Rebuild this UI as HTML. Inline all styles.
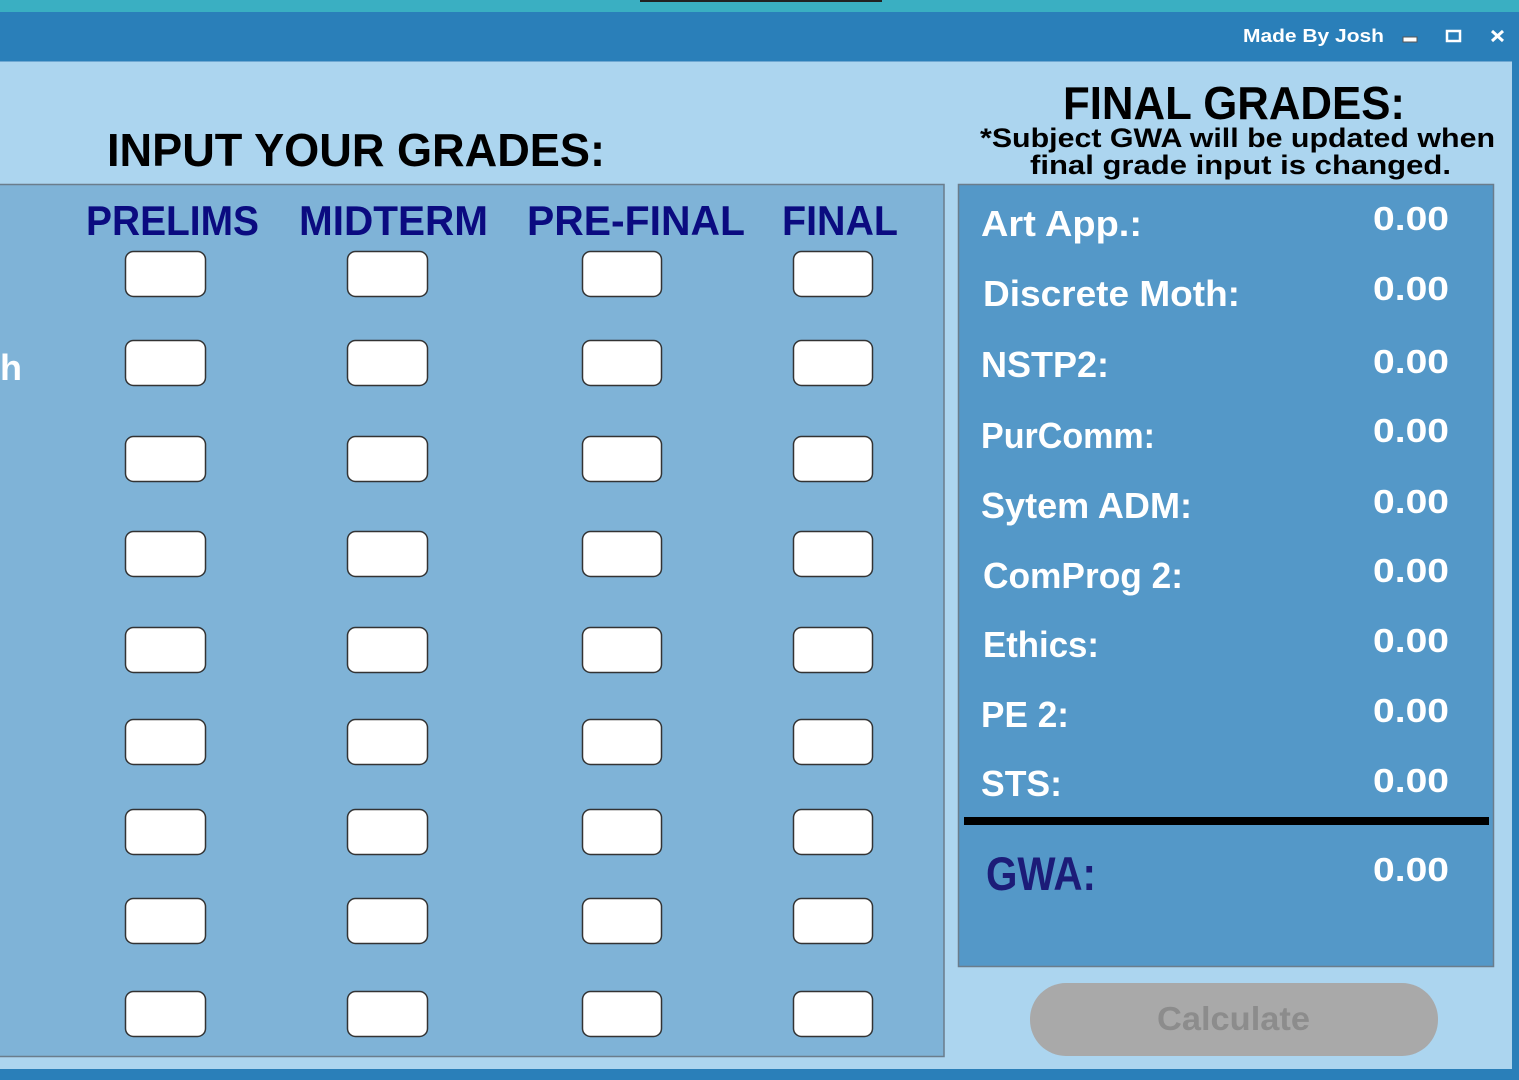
<!DOCTYPE html>
<html><head><meta charset="utf-8"><style>
html,body{margin:0;padding:0;width:1519px;height:1080px;overflow:hidden;background:#2a7fb9}
svg{position:absolute;left:0;top:0}
text{font-family:"Liberation Sans",sans-serif;font-weight:bold}
</style></head><body>
<svg width="1519" height="1080" viewBox="0 0 1519 1080">
<rect x="0" y="0" width="1519" height="12" fill="#3aafc2"/>
<rect x="640" y="0" width="242" height="2" fill="#222"/>
<rect x="0" y="12" width="1519" height="50" fill="#2a7fb9"/>
<rect x="0" y="61" width="1512" height="1008" fill="#acd5ef"/>
<rect x="0" y="61" width="1512" height="1" fill="#6fa8d2"/>
<text x="1243" y="42" font-size="18" fill="#fff" textLength="141" lengthAdjust="spacingAndGlyphs">Made By Josh</text>
<rect x="1403" y="37" width="14" height="5" fill="#fff" stroke="#555" stroke-width="1"/>
<rect x="1447" y="31" width="13" height="10" fill="none" stroke="#fff" stroke-width="2.5"/>
<path d="M1492 31 L1503 41 M1503 31 L1492 41" stroke="#fff" stroke-width="3"/>
<text x="107" y="166" font-size="46" fill="#000" textLength="498" lengthAdjust="spacingAndGlyphs">INPUT YOUR GRADES:</text>
<text x="1063" y="119" font-size="46" fill="#000" textLength="342" lengthAdjust="spacingAndGlyphs">FINAL GRADES:</text>
<text x="980" y="147" font-size="27" fill="#000" textLength="515" lengthAdjust="spacingAndGlyphs">*Subject GWA will be updated when</text>
<text x="1030" y="174" font-size="27" fill="#000" textLength="421" lengthAdjust="spacingAndGlyphs">final grade input is changed.</text>
<rect x="-2" y="184.5" width="946" height="872" fill="#7fb3d7" stroke="#6a7d8c" stroke-width="1.5"/>
<g font-size="42" fill="#0b0b80">
<text x="86" y="235" textLength="173" lengthAdjust="spacingAndGlyphs">PRELIMS</text>
<text x="299" y="235" textLength="189" lengthAdjust="spacingAndGlyphs">MIDTERM</text>
<text x="527" y="235" textLength="218" lengthAdjust="spacingAndGlyphs">PRE-FINAL</text>
<text x="782" y="235" textLength="116" lengthAdjust="spacingAndGlyphs">FINAL</text>
</g>
<text x="0" y="380" font-size="36" fill="#fff">h</text>
<g fill="#fff" stroke="#333" stroke-width="1.5">
<g id="r"><rect x="125.5" y="251.5" width="80" height="45" rx="8"/><rect x="347.5" y="251.5" width="80" height="45" rx="8"/><rect x="582.5" y="251.5" width="79" height="45" rx="8"/><rect x="793.5" y="251.5" width="79" height="45" rx="8"/></g>
<use href="#r" y="89"/><use href="#r" y="185"/><use href="#r" y="280"/><use href="#r" y="376"/><use href="#r" y="468"/><use href="#r" y="558"/><use href="#r" y="647"/><use href="#r" y="740"/>
</g>
<rect x="958.5" y="184.5" width="535" height="782" fill="#5498c8" stroke="#6a7d8c" stroke-width="1.5"/>
<g font-size="36" fill="#fff">
<text x="981" y="236" textLength="161" lengthAdjust="spacingAndGlyphs">Art App.:</text>
<text x="983" y="306" textLength="257" lengthAdjust="spacingAndGlyphs">Discrete Moth:</text>
<text x="981" y="377" textLength="128" lengthAdjust="spacingAndGlyphs">NSTP2:</text>
<text x="981" y="448" textLength="174" lengthAdjust="spacingAndGlyphs">PurComm:</text>
<text x="981" y="518" textLength="211" lengthAdjust="spacingAndGlyphs">Sytem ADM:</text>
<text x="983" y="588" textLength="200" lengthAdjust="spacingAndGlyphs">ComProg 2:</text>
<text x="983" y="657" textLength="116" lengthAdjust="spacingAndGlyphs">Ethics:</text>
<text x="981" y="727" textLength="88" lengthAdjust="spacingAndGlyphs">PE 2:</text>
<text x="981" y="796" textLength="81" lengthAdjust="spacingAndGlyphs">STS:</text>
</g>
<g font-size="33" fill="#fff">
<text x="1373" y="230" textLength="76" lengthAdjust="spacingAndGlyphs">0.00</text>
<text x="1373" y="300" textLength="76" lengthAdjust="spacingAndGlyphs">0.00</text>
<text x="1373" y="373" textLength="76" lengthAdjust="spacingAndGlyphs">0.00</text>
<text x="1373" y="442" textLength="76" lengthAdjust="spacingAndGlyphs">0.00</text>
<text x="1373" y="513" textLength="76" lengthAdjust="spacingAndGlyphs">0.00</text>
<text x="1373" y="582" textLength="76" lengthAdjust="spacingAndGlyphs">0.00</text>
<text x="1373" y="652" textLength="76" lengthAdjust="spacingAndGlyphs">0.00</text>
<text x="1373" y="722" textLength="76" lengthAdjust="spacingAndGlyphs">0.00</text>
<text x="1373" y="792" textLength="76" lengthAdjust="spacingAndGlyphs">0.00</text>
<text x="1373" y="881" textLength="76" lengthAdjust="spacingAndGlyphs">0.00</text>
</g>
<rect x="964" y="817" width="525" height="8" fill="#000"/>
<text x="986" y="890" font-size="47" fill="#1c1c78" textLength="110" lengthAdjust="spacingAndGlyphs">GWA:</text>
<rect x="1030" y="983" width="408" height="73" rx="36" fill="#a9a9a9"/>
<text x="1157" y="1030" font-size="33" fill="#8c8c8c" textLength="153" lengthAdjust="spacingAndGlyphs">Calculate</text>
</svg>
</body></html>
